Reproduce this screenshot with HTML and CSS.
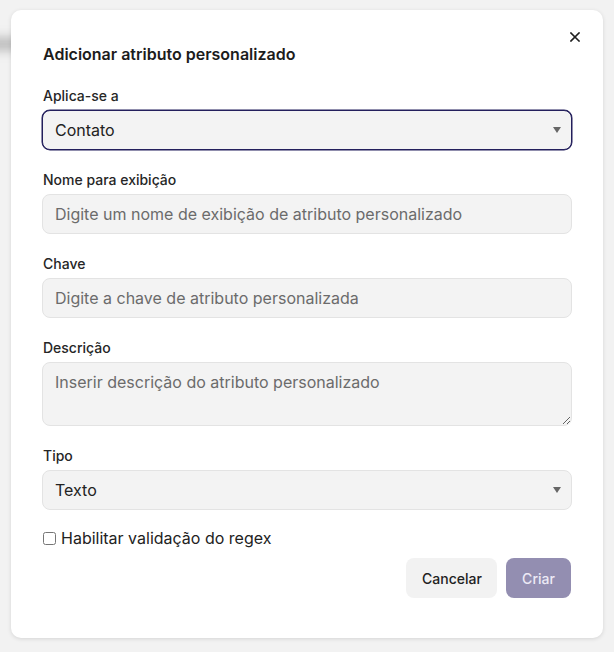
FILE: index.html
```html
<!DOCTYPE html>
<html lang="pt">
<head>
<meta charset="utf-8">
<link rel="stylesheet" href="styles.css">
</head>
<body>
<div class="backdrop-blur"></div>
<div class="modal">
  <button class="close" aria-label="Fechar">
    <svg width="10" height="10" viewBox="0 0 10 10"><path d="M1 1L9 9M9 1L1 9" stroke="#1f1f1f" stroke-width="1.6" stroke-linecap="square"/></svg>
  </button>
  <h2 class="title">Adicionar atributo personalizado</h2>
  <form class="form">
    <div class="field">
      <label class="label">Aplica-se a</label>
      <div class="select-wrap">
        <select class="control select focused"><option>Contato</option></select>
      </div>
    </div>
    <div class="field">
      <label class="label">Nome para exibição</label>
      <input class="control" placeholder="Digite um nome de exibição de atributo personalizado">
    </div>
    <div class="field">
      <label class="label">Chave</label>
      <input class="control" placeholder="Digite a chave de atributo personalizada">
    </div>
    <div class="field">
      <label class="label">Descrição</label>
      <textarea class="control textarea" placeholder="Inserir descrição do atributo personalizado"></textarea>
    </div>
    <div class="field">
      <label class="label">Tipo</label>
      <div class="select-wrap">
        <select class="control select"><option>Texto</option></select>
      </div>
    </div>
    <label class="check"><input type="checkbox" class="checkbox"><span>Habilitar validação do regex</span></label>
    <div class="actions">
      <button type="button" class="btn btn-secondary">Cancelar</button>
      <button type="button" class="btn btn-primary">Criar</button>
    </div>
  </form>
</div>
</body>
</html>
```

FILE: styles.css
```css
* { box-sizing: border-box; }
html, body { margin: 0; padding: 0; }
body {
  background: #f2f2f2;
  font-family: Inter, "Noto Sans", sans-serif;
  color: #1f1f1f;
  width: 614px;
  height: 652px;
  overflow: hidden;
  position: relative;
  padding: 10px 11px;
}
.backdrop-blur {
  position: absolute;
  left: -20px;
  top: 38px;
  width: 60px;
  height: 12px;
  background: #9a9a9a;
  filter: blur(6px);
  opacity: 0.7;
}
.modal {
  position: relative;
  background: #fff;
  border-radius: 10px;
  box-shadow: 0 1px 4px rgba(0,0,0,0.12);
  height: 628px;
  padding: 32px 31px 0 31px;
}
.close {
  position: absolute;
  top: 18px;
  right: 19px;
  width: 18px;
  height: 18px;
  border: none;
  background: none;
  padding: 0;
  display: flex;
  align-items: center;
  justify-content: center;
  cursor: pointer;
}
.title {
  margin: 0 0 0 1px;
  font-size: 16px;
  line-height: 24px;
  font-weight: 600;
  color: #1c1c1c;
}
.form {
  margin-top: 20px;
  display: flex;
  flex-direction: column;
  gap: 20px;
}
.field {
  display: flex;
  flex-direction: column;
  gap: 4px;
}
.label {
  font-size: 14px;
  line-height: 20px;
  font-weight: 500;
  color: #262626;
  padding-left: 1px;
}
.control {
  width: 100%;
  height: 40px;
  background: #f3f3f3;
  border: 1px solid #e3e3e3;
  border-radius: 8px;
  padding: 0 12px;
  font-family: inherit;
  font-size: 16px;
  color: #222;
  outline: none;
}
.control::placeholder { color: #6b6b6b; }
.textarea {
  height: 64px;
  padding-top: 9px;
  resize: vertical;
  display: block;
}
.select-wrap { position: relative; }
.select {
  appearance: none;
  -webkit-appearance: none;
}
.select-wrap::after {
  content: "";
  position: absolute;
  right: 11px;
  top: 17px;
  border-left: 4px solid transparent;
  border-right: 4px solid transparent;
  border-top: 6px solid #666;
  pointer-events: none;
}
.focused {
  border: 1px solid #231f5c;
  box-shadow: 0 0 0 0.5px #231f5c;
}
.check {
  display: flex;
  align-items: center;
  gap: 5px;
  font-size: 16px;
  line-height: 24px;
  color: #222;
  margin-top: -4px;
}
.checkbox {
  margin: 0 0 0 1px;
  width: 13px;
  height: 13px;
}
.actions {
  display: flex;
  justify-content: flex-end;
  gap: 9px;
  margin-top: -12px;
  padding-right: 1px;
}
.btn {
  height: 40px;
  border: none;
  border-radius: 8px;
  font-family: inherit;
  font-size: 14px;
  font-weight: 500;
  padding: 0 16px;
}
.btn-secondary {
  background: #f2f2f2;
  color: #222;
  width: 91px;
}
.btn-primary {
  background: #938eb1;
  color: #ece9f5;
  width: 65px;
}
```
